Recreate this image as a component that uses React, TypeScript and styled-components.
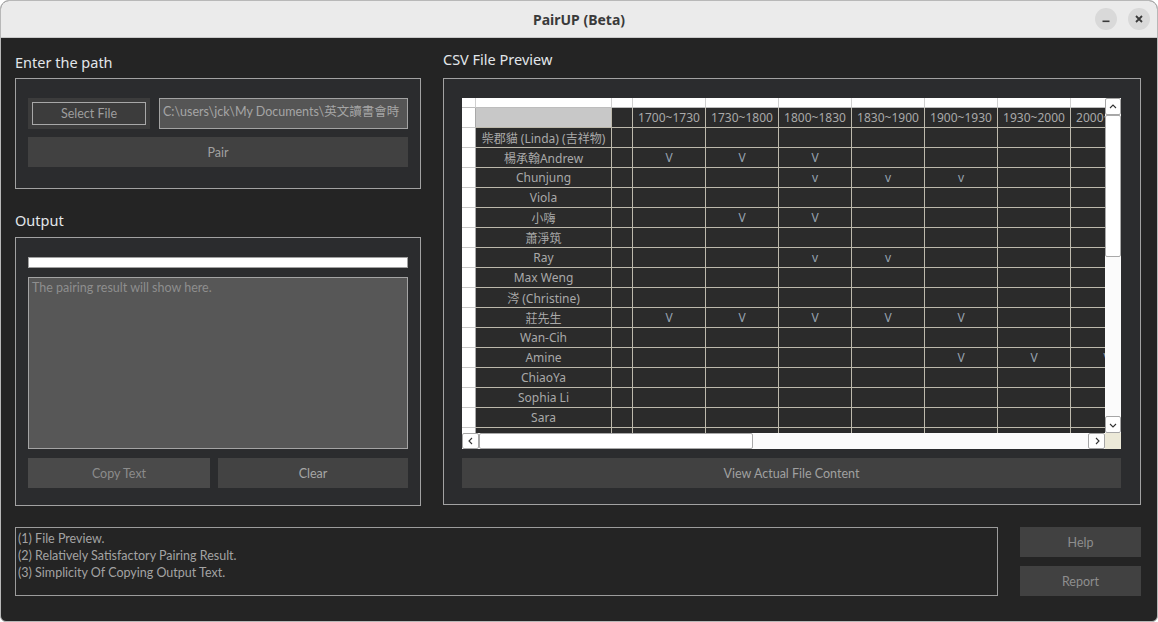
import React from "react";
import styled, { createGlobalStyle } from "styled-components";

const Global = createGlobalStyle`
  html, body { margin: 0; padding: 0; background: #ffffff; }
  * { box-sizing: border-box; }
`;

const UI = `"Lato", "Noto Sans", "Noto Sans CJK TC", sans-serif`;
const TBL = `"Noto Sans", "Noto Sans CJK TC", sans-serif`;

const Window = styled.div`
  width: 1158px;
  height: 622px;
  border: 1px solid #b8b8b8;
  border-radius: 9px 9px 6px 6px;
  overflow: hidden;
  display: flex;
  flex-direction: column;
  background: #242424;
`;

const TitleBar = styled.div`
  height: 37px;
  flex: none;
  background: #ebebeb;
  border-bottom: 1px solid #c9c9c9;
  display: grid;
  grid-template-columns: 1fr auto 1fr;
  align-items: center;
`;

const Title = styled.div`
  grid-column: 2;
  font-family: "Noto Sans", sans-serif;
  font-weight: 700;
  font-size: 14px;
  color: #3a3a3a;
`;

const Controls = styled.div`
  grid-column: 3;
  justify-self: end;
  display: flex;
  gap: 11px;
  padding-right: 7px;
`;

const CircleBtn = styled.div`
  width: 22px;
  height: 22px;
  border-radius: 50%;
  background: #d9d9d9;
  display: flex;
  align-items: center;
  justify-content: center;
`;

const Body = styled.div`
  flex: 1;
  display: flex;
  flex-direction: column;
  padding: 0 16px 0 14px;
`;

const TopArea = styled.div`
  display: flex;
  gap: 22px;
`;

const Column = styled.div<{ $width?: number; $pt: number }>`
  display: flex;
  flex-direction: column;
  ${(p) => (p.$width ? `width: ${p.$width}px;` : "flex: 1;")}
  padding-top: ${(p) => p.$pt}px;
`;

const SectionLabel = styled.div<{ $mt?: number; $mb: number }>`
  height: 20px;
  line-height: 20px;
  font-family: "Noto Sans", sans-serif;
  font-size: 14.5px;
  color: #e2e6ea;
  margin-top: ${(p) => p.$mt ?? 0}px;
  margin-bottom: ${(p) => p.$mb}px;
`;

const Group = styled.div<{ $h: number; $pl?: number; $pr?: number }>`
  height: ${(p) => p.$h}px;
  border: 1px solid #a2a2a2;
  background: #2b2c2e;
  padding: 19px ${(p) => p.$pr ?? 12}px 0 ${(p) => p.$pl ?? 12}px;
  display: flex;
  flex-direction: column;
  gap: 9px;
`;

const Row = styled.div<{ $gap: number }>`
  display: flex;
  gap: ${(p) => p.$gap}px;
`;

const SelectWrap = styled.div`
  width: 122px;
  height: 31px;
  padding: 4px;
  background: #3c3c3c;
`;

const SelectInner = styled.div`
  height: 100%;
  border: 1px solid #a8a8a8;
  display: flex;
  align-items: center;
  justify-content: center;
  font-family: ${UI};
  font-size: 12.5px;
  color: #9e9e9e;
`;

const PathInput = styled.div`
  flex: 1;
  height: 31px;
  background: #555555;
  border: 1px solid #a3a3a3;
  padding: 2px 3px;
  font-family: ${UI};
  font-size: 12.5px;
  color: #a5a5a5;
  white-space: nowrap;
  overflow: hidden;
`;

const Button = styled.div<{ $bg?: string; $color?: string; $w?: number; $grow?: boolean }>`
  height: 30px;
  flex: ${(p) => (p.$grow ? "1 1 0" : "none")};
  ${(p) => (p.$w ? `width: ${p.$w}px;` : "")}
  background: ${(p) => p.$bg ?? "#414141"};
  color: ${(p) => p.$color ?? "#a0a0a0"};
  display: flex;
  align-items: center;
  justify-content: center;
  font-family: ${UI};
  font-size: 12.5px;
`;

const Progress = styled.div`
  height: 11px;
  background: #ffffff;
  border: 1px solid #a0a0a0;
`;

const OutputArea = styled.div`
  height: 172px;
  background: #575757;
  border: 1px solid #a4a4a4;
  padding: 2px 3px;
  font-family: ${UI};
  font-size: 12.5px;
  color: #8e8e8e;
`;

/* table */
const TableFrame = styled.div`
  height: 351px;
  flex: none;
  display: grid;
  grid-template-columns: 643px 16px;
  grid-template-rows: 335px 16px;
`;

const Viewport = styled.div`
  overflow: hidden;
  background: #2b2b2b;
`;

const TRow = styled.div<{ $h: number }>`
  display: flex;
  height: ${(p) => p.$h}px;
  flex: none;
`;

const HeadCell = styled.div<{ $w: number }>`
  width: ${(p) => p.$w}px;
  flex: none;
  height: 100%;
  background: #ffffff;
  border-right: 1px solid #cfcfcf;
  border-bottom: 1px solid #bdbdbd;
`;

const RowHead = styled.div`
  width: 14px;
  flex: none;
  height: 100%;
  background: #ffffff;
  border-right: 1px solid #a8a8a8;
  border-bottom: 1px solid #c8c8c8;
`;

const Cell = styled.div<{ $w: number; $fill?: boolean; $mark?: boolean }>`
  width: ${(p) => p.$w}px;
  flex: none;
  height: 100%;
  border-right: 1px solid #bdb9ac;
  border-bottom: 1px solid #bdb9ac;
  background: ${(p) => (p.$fill ? "#c8c8c8" : "#2b2b2b")};
  display: flex;
  align-items: center;
  justify-content: center;
  font-family: ${TBL};
  font-size: 12px;
  color: ${(p) => (p.$mark ? "#97a3b0" : "#a9a9a9")};
  white-space: nowrap;
  overflow: hidden;
`;

const VScroll = styled.div`
  display: flex;
  flex-direction: column;
  background: #fbfbfb;
`;

const HScroll = styled.div`
  display: flex;
  background: #fbfbfb;
`;

const Spacer = styled.div`
  flex: 1;
`;

const ArrowBtn = styled.div`
  width: 16px;
  height: 17px;
  flex: none;
  background: #ffffff;
  border: 1px solid #a6a6a6;
  border-radius: 2px;
  display: flex;
  align-items: center;
  justify-content: center;
  color: #333;
`;

const HArrowBtn = styled(ArrowBtn)`
  width: 17px;
  height: 16px;
`;

const Handle = styled.div<{ $w?: number; $h?: number }>`
  ${(p) => (p.$w ? `width: ${p.$w}px;` : "")}
  ${(p) => (p.$h ? `height: ${p.$h}px;` : "")}
  flex: none;
  background: #ffffff;
  border: 1px solid #a9a9a9;
  border-radius: 2px;
`;

const Corner = styled.div`
  background: #ece9d8;
`;

/* bottom */
const BottomArea = styled.div`
  display: flex;
  gap: 22px;
  margin-top: 21px;
`;

const InfoBox = styled.div`
  width: 983px;
  height: 69px;
  border: 1px solid #9c9c9c;
  padding: 2px 2px;
  font-family: ${UI};
  font-size: 12.5px;
  line-height: 17px;
  color: #a3a3a3;
`;

const SideButtons = styled.div`
  flex: 1;
  display: flex;
  flex-direction: column;
  gap: 9px;
`;

const Arrow = ({ dir }: { dir: "up" | "down" | "left" | "right" }) => {
  const d = {
    up: "M2 6 L5 3 L8 6",
    down: "M2 4 L5 7 L8 4",
    left: "M6 2 L3 5 L6 8",
    right: "M4 2 L7 5 L4 8",
  }[dir];
  return (
    <svg width="10" height="10" viewBox="0 0 10 10">
      <path d={d} fill="none" stroke="#333" strokeWidth="1.1" />
    </svg>
  );
};

const colWidths = [136, 21, 73, 73, 73, 73, 73, 73, 73];
const times = ["1700~1730", "1730~1800", "1800~1830", "1830~1900", "1900~1930", "1930~2000", "2000~2030"];

type R = { name: string; marks?: Record<number, string> };
const rows: R[] = [
  { name: "柴郡貓 (Linda) (吉祥物)" },
  { name: "楊承翰Andrew", marks: { 2: "V", 3: "V", 4: "V" } },
  { name: "Chunjung", marks: { 4: "v", 5: "v", 6: "v" } },
  { name: "Viola" },
  { name: "小嗨", marks: { 3: "V", 4: "V" } },
  { name: "蕭淨筑" },
  { name: "Ray", marks: { 4: "v", 5: "v" } },
  { name: "Max Weng" },
  { name: "涔 (Christine)" },
  { name: "莊先生", marks: { 2: "V", 3: "V", 4: "V", 5: "V", 6: "V" } },
  { name: "Wan-Cih" },
  { name: "Amine", marks: { 6: "V", 7: "V", 8: "V" } },
  { name: "ChiaoYa" },
  { name: "Sophia Li" },
  { name: "Sara" },
  { name: "" },
];

export default function App() {
  return (
    <>
      <Global />
      <Window>
        <TitleBar>
          <Title>PairUP (Beta)</Title>
          <Controls>
            <CircleBtn>
              <svg width="10" height="10" viewBox="0 0 10 10">
                <rect x="1.5" y="6.5" width="7" height="1.6" fill="#3a3a3a" />
              </svg>
            </CircleBtn>
            <CircleBtn>
              <svg width="10" height="10" viewBox="0 0 10 10">
                <path d="M2 2 L8 8 M8 2 L2 8" stroke="#3a3a3a" strokeWidth="1.8" />
              </svg>
            </CircleBtn>
          </Controls>
        </TitleBar>
        <Body>
          <TopArea>
            <Column $width={407} $pt={14}>
              <SectionLabel $mb={6}>Enter the path</SectionLabel>
              <Group $h={111}>
                <Row $gap={9}>
                  <SelectWrap>
                    <SelectInner>Select File</SelectInner>
                  </SelectWrap>
                  <PathInput>C:\users\jck\My Documents\英文讀書會時</PathInput>
                </Row>
                <Row $gap={0} style={{ marginTop: -1 }}>
                  <Button $grow>Pair</Button>
                </Row>
              </Group>
              <SectionLabel $mt={21} $mb={7}>Output</SectionLabel>
              <Group $h={269}>
                <Progress />
                <OutputArea>The pairing result will show here.</OutputArea>
                <Row $gap={8}>
                  <Button $w={182} $bg="#4a4a4a" $color="#8c8c8c">Copy Text</Button>
                  <Button $grow $bg="#434343" $color="#a6a6a6">Clear</Button>
                </Row>
              </Group>
            </Column>
            <Column $pt={11}>
              <SectionLabel $mb={9}>CSV File Preview</SectionLabel>
              <Group $h={427} $pl={18} $pr={19}>
                <TableFrame>
                  <Viewport>
                    <TRow $h={10}>
                      <HeadCell $w={14} />
                      {colWidths.map((w, i) => (
                        <HeadCell key={i} $w={w} />
                      ))}
                    </TRow>
                    <TRow $h={20}>
                      <RowHead />
                      <Cell $w={136} $fill />
                      <Cell $w={21} />
                      {times.map((t) => (
                        <Cell key={t} $w={73}>{t}</Cell>
                      ))}
                    </TRow>
                    {rows.map((r, ri) => (
                      <TRow key={ri} $h={20}>
                        <RowHead />
                        {colWidths.map((w, ci) => (
                          <Cell key={ci} $w={w} $mark={ci > 0}>
                            {ci === 0 ? r.name : r.marks?.[ci] ?? ""}
                          </Cell>
                        ))}
                      </TRow>
                    ))}
                  </Viewport>
                  <VScroll>
                    <ArrowBtn><Arrow dir="up" /></ArrowBtn>
                    <Handle $h={142} />
                    <Spacer />
                    <ArrowBtn><Arrow dir="down" /></ArrowBtn>
                  </VScroll>
                  <HScroll>
                    <HArrowBtn><Arrow dir="left" /></HArrowBtn>
                    <Handle $w={274} />
                    <Spacer />
                    <HArrowBtn><Arrow dir="right" /></HArrowBtn>
                  </HScroll>
                  <Corner />
                </TableFrame>
                <Button>View Actual File Content</Button>
              </Group>
            </Column>
          </TopArea>
          <BottomArea>
            <InfoBox>
              (1) File Preview.
              <br />
              (2) Relatively Satisfactory Pairing Result.
              <br />
              (3) Simplicity Of Copying Output Text.
            </InfoBox>
            <SideButtons>
              <Button $color="#8e8e8e">Help</Button>
              <Button $color="#8e8e8e">Report</Button>
            </SideButtons>
          </BottomArea>
        </Body>
      </Window>
    </>
  );
}
